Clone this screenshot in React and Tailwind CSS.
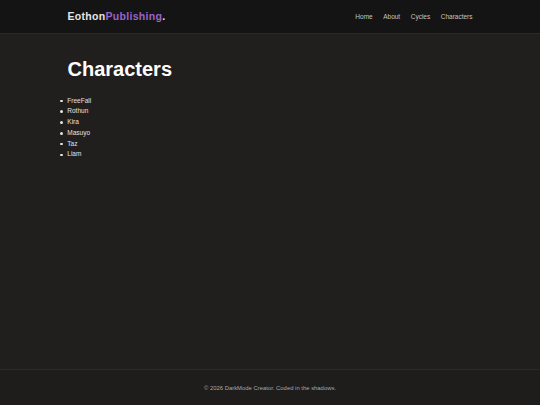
const characters = ["FreeFall", "Rothun", "Kira", "Masuyo", "Taz", "Liam"];
const links = ["Home", "About", "Cycles", "Characters"];

export default function App() {
  return (
    <div
      className="flex min-h-screen flex-col bg-[#211e1e] text-[#eeeeee]"
      style={{ fontFamily: '"Liberation Sans", Arial, sans-serif' }}
    >
      <header className="h-[34px] border-b border-[#2c2929] bg-[#141414]">
        <div className="mx-auto flex h-full w-3/4 items-center justify-between">
          <div className="text-[10.5px] font-bold tracking-[0.3px] text-[#e6e6e6]">
            Eothon<span className="text-[#9b63cc]">Publishing</span>.
          </div>
          <nav className="flex gap-[10.5px] text-[6.5px] text-[#c4c4c4]">
            {links.map((l) => (
              <a key={l} href="#">
                {l}
              </a>
            ))}
          </nav>
        </div>
      </header>

      <main className="flex-1">
        <div className="mx-auto w-3/4 pt-[24px]">
          <h1 className="text-[20px] leading-[23px] font-bold text-white">Characters</h1>
          <ul className="ml-[-7.3px] mt-[14.5px] text-[6.5px] leading-[10.8px] text-[#e4e4e4]">
            {characters.map((c) => (
              <li key={c} className="flex items-center">
                <span className="mr-[4.6px] h-[2.5px] w-[2.5px] rounded-full bg-[#e4e4e4]" />
                {c}
              </li>
            ))}
          </ul>
        </div>
      </main>

      <footer className="flex h-[36px] items-center justify-center border-t border-[#2c2929] bg-[#1f1c1c] pt-[1px] text-[5.9px] text-[#a8a8a8]">
        © 2026 DarkMode Creator. Coded in the shadows.
      </footer>
    </div>
  );
}
